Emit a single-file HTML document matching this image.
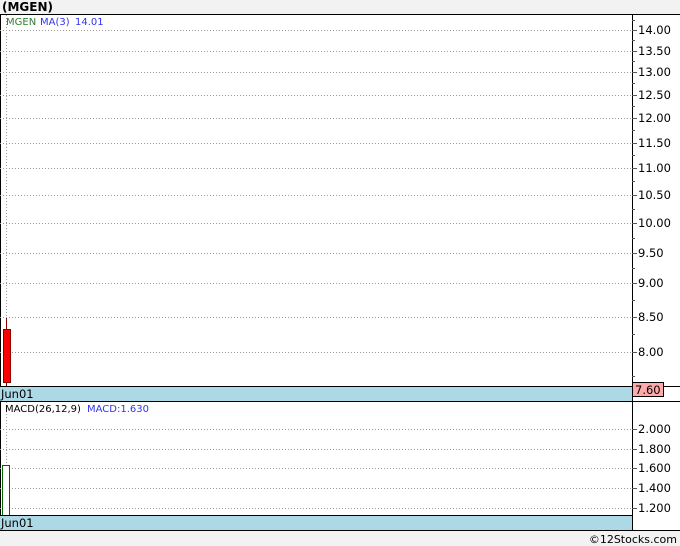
<!DOCTYPE html>
<html><head><meta charset="utf-8"><style>
html,body{margin:0;padding:0;background:#f2f2f2;width:680px;height:546px;overflow:hidden}
svg{display:block}
text{font-family:"DejaVu Sans","Liberation Sans",sans-serif}
</style></head><body>
<svg width="680" height="546" xmlns="http://www.w3.org/2000/svg">
<rect x="0" y="0" width="680" height="546" fill="#f2f2f2"/>
<text x="2" y="11" font-size="12" font-weight="bold" fill="#000">(MGEN)</text>
<rect x="0" y="14" width="680" height="516" fill="#fff"/>
<line x1="0" y1="14.5" x2="680" y2="14.5" stroke="#000"/>
<line x1="0.5" y1="14" x2="0.5" y2="530" stroke="#000"/>
<line x1="632.5" y1="14" x2="632.5" y2="530" stroke="#000"/>
<line x1="6.5" y1="15" x2="6.5" y2="515" stroke="#999" stroke-dasharray="1,2"/>
<g stroke="#999" stroke-dasharray="1,2">
<line x1="0" y1="30.5" x2="632" y2="30.5"/><line x1="0" y1="51.5" x2="632" y2="51.5"/>
<line x1="0" y1="72.5" x2="632" y2="72.5"/><line x1="0" y1="95.5" x2="632" y2="95.5"/>
<line x1="0" y1="118.5" x2="632" y2="118.5"/><line x1="0" y1="143.5" x2="632" y2="143.5"/>
<line x1="0" y1="168.5" x2="632" y2="168.5"/><line x1="0" y1="195.5" x2="632" y2="195.5"/>
<line x1="0" y1="223.5" x2="632" y2="223.5"/><line x1="0" y1="253.5" x2="632" y2="253.5"/>
<line x1="0" y1="283.5" x2="632" y2="283.5"/><line x1="0" y1="317.5" x2="632" y2="317.5"/>
<line x1="0" y1="352.5" x2="632" y2="352.5"/>
<line x1="0" y1="429.5" x2="632" y2="429.5"/><line x1="0" y1="449.5" x2="632" y2="449.5"/>
<line x1="0" y1="468.5" x2="632" y2="468.5"/><line x1="0" y1="488.5" x2="632" y2="488.5"/>
<line x1="0" y1="508.5" x2="632" y2="508.5"/>
</g>
<g stroke="#555">
<line x1="632" y1="30.5" x2="637" y2="30.5"/><line x1="632" y1="51.5" x2="637" y2="51.5"/>
<line x1="632" y1="72.5" x2="637" y2="72.5"/><line x1="632" y1="95.5" x2="637" y2="95.5"/>
<line x1="632" y1="118.5" x2="637" y2="118.5"/><line x1="632" y1="143.5" x2="637" y2="143.5"/>
<line x1="632" y1="168.5" x2="637" y2="168.5"/><line x1="632" y1="195.5" x2="637" y2="195.5"/>
<line x1="632" y1="223.5" x2="637" y2="223.5"/><line x1="632" y1="253.5" x2="637" y2="253.5"/>
<line x1="632" y1="283.5" x2="637" y2="283.5"/><line x1="632" y1="317.5" x2="637" y2="317.5"/>
<line x1="632" y1="352.5" x2="637" y2="352.5"/>
<line x1="632" y1="429.5" x2="637" y2="429.5"/><line x1="632" y1="449.5" x2="637" y2="449.5"/>
<line x1="632" y1="468.5" x2="637" y2="468.5"/><line x1="632" y1="488.5" x2="637" y2="488.5"/>
<line x1="632" y1="508.5" x2="637" y2="508.5"/>
<line x1="632" y1="20.5" x2="635" y2="20.5"/><line x1="632" y1="40.5" x2="635" y2="40.5"/>
<line x1="632" y1="61.5" x2="635" y2="61.5"/><line x1="632" y1="83.5" x2="635" y2="83.5"/>
<line x1="632" y1="106.5" x2="635" y2="106.5"/><line x1="632" y1="130.5" x2="635" y2="130.5"/>
<line x1="632" y1="155.5" x2="635" y2="155.5"/><line x1="632" y1="181.5" x2="635" y2="181.5"/>
<line x1="632" y1="209.5" x2="635" y2="209.5"/><line x1="632" y1="238.5" x2="635" y2="238.5"/>
<line x1="632" y1="268.5" x2="635" y2="268.5"/><line x1="632" y1="300.5" x2="635" y2="300.5"/>
<line x1="632" y1="334.5" x2="635" y2="334.5"/><line x1="632" y1="376.5" x2="635" y2="376.5"/>
</g>
<g font-size="11.5" fill="#000">
<text x="638" y="34">14.00</text><text x="638" y="55">13.50</text><text x="638" y="76">13.00</text>
<text x="638" y="99">12.50</text><text x="638" y="122">12.00</text><text x="638" y="147">11.50</text>
<text x="638" y="172">11.00</text><text x="638" y="199">10.50</text><text x="638" y="227">10.00</text>
<text x="638" y="257">9.50</text><text x="638" y="287">9.00</text><text x="638" y="321">8.50</text>
<text x="638" y="356">8.00</text>
<text x="638" y="433">2.000</text><text x="638" y="453">1.800</text><text x="638" y="472">1.600</text>
<text x="638" y="492">1.400</text><text x="638" y="512">1.200</text>
</g>
<text x="6" y="25" font-size="10" fill="#2e7d32">MGEN</text>
<text x="40" y="25" font-size="10" fill="#3333ee">MA(3)</text>
<text x="75" y="25" font-size="10" fill="#3333ee">14.01</text>
<line x1="6.5" y1="318" x2="6.5" y2="386" stroke="#800"/>
<rect x="3.5" y="329.5" width="7" height="53" fill="#f00" stroke="#800"/>
<rect x="0" y="386" width="632" height="15" fill="#add8e6"/>
<line x1="0" y1="386.5" x2="680" y2="386.5" stroke="#000"/>
<line x1="0" y1="401.5" x2="680" y2="401.5" stroke="#000"/>
<rect x="632.5" y="382.5" width="31" height="14" fill="#ffaaaa" stroke="#000"/>
<text x="635" y="394" font-size="11.5" fill="#000">7.60</text>
<text x="1" y="398" font-size="11.5" fill="#000">Jun01</text>
<text x="5" y="412" font-size="10" fill="#000">MACD(26,12,9)</text>
<text x="87" y="412" font-size="10" fill="#3333ee">MACD:1.630</text>
<rect x="2.5" y="465.5" width="7" height="50" fill="#fff" stroke="#060"/>
<rect x="0" y="515" width="632" height="15" fill="#add8e6"/>
<line x1="0" y1="515.5" x2="632" y2="515.5" stroke="#000"/>
<line x1="0" y1="530.5" x2="680" y2="530.5" stroke="#000"/>
<text x="1" y="527" font-size="11.5" fill="#000">Jun01</text>
<rect x="0" y="531" width="680" height="15" fill="#f2f2f2"/>
<text x="677" y="543" font-size="11" fill="#000" text-anchor="end">©12Stocks.com</text>
</svg>
</body></html>
